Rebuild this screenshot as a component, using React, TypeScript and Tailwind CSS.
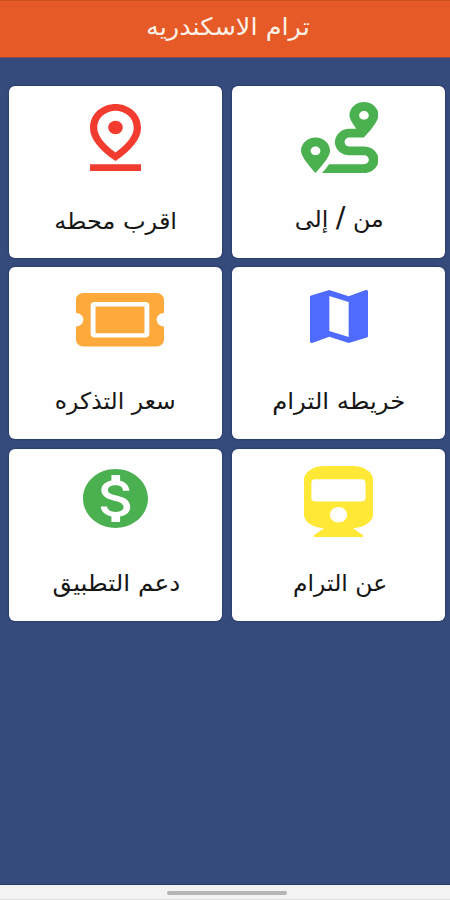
import type { ReactNode } from "react";

type IconProps = { box: string; className: string; children: ReactNode };

function Icon({ box, className, children }: IconProps) {
  return (
    <svg viewBox={box} preserveAspectRatio="none" fill="currentColor" className={`block shrink-0 ${className}`} aria-hidden="true">
      {children}
    </svg>
  );
}

type CardProps = { label: ReactNode; labelClass: string; icon: ReactNode };

function Card({ label, labelClass, icon }: CardProps) {
  return (
    <button className="flex h-[172px] flex-col rounded-[6px] bg-[#fefefe] shadow-[0_0_2px_rgba(15,30,75,0.8)]">
      <span className="flex h-[112px] w-full shrink-0 flex-col">{icon}</span>
      <span dir="rtl" className={`self-center whitespace-nowrap text-[23px] leading-[44px] text-[#161616] ${labelClass}`}>
        {label}
      </span>
    </button>
  );
}

export default function App() {
  return (
    <div className="flex h-[900px] w-[450px] flex-col overflow-hidden bg-[#344b7c] font-['DejaVu_Sans',sans-serif]">
      <header className="flex h-[58px] shrink-0 justify-center border-t border-b border-t-[#cb5423] border-b-[#8f4b50] bg-[#e55a27]">
        <h1 dir="rtl" className="ml-[6px] scale-x-[1.065] whitespace-nowrap text-[24px] leading-[52px] text-[#fff0e5]">
          ترام الاسكندريه
        </h1>
      </header>

      <main className="grid grow grid-cols-[213px_213px] content-start gap-x-[10px] gap-y-[9.6px] pl-[9px] pt-[27.7px]">
        <Card
          label="اقرب محطه"
          labelClass="mt-px scale-x-[1.045]"
          icon={
            <Icon box="5 2 14 20" className="ml-[81px] mt-[18px] h-[67px] w-[51px] text-[#f33c30]">
              <path d="M12 4c1.93 0 5 1.4 5 5.15 0 2.16-1.72 4.67-5 7.32-3.28-2.65-5-5.17-5-7.32C7 5.4 10.07 4 12 4m0-2C8.73 2 5 4.46 5 9.15c0 3.12 2.33 6.41 7 9.85 4.67-3.44 7-6.73 7-9.85C19 4.46 15.27 2 12 2z" />
              <path d="M12 7c-1.1 0-2 .9-2 2s.9 2 2 2 2-.9 2-2-.9-2-2-2zM5 20h14v2H5v-2z" />
            </Icon>
          }
        />
        <Card
          label={
            <>
              من <span className="text-[28px] leading-none">/</span> إلى
            </>
          }
          labelClass="-mt-px ml-px scale-x-[1.03]"
          icon={
            <Icon box="0 0 512 512" className="ml-[68.5px] mt-[16px] h-[71px] w-[77.5px] text-[#4bb04f]">
              <path d="M416 320h-96c-17.6 0-32-14.4-32-32s14.4-32 32-32h96s96-107 96-160-43-96-96-96-96 43-96 96c0 25.5 22.2 63.4 45.3 96H320c-52.9 0-96 43.1-96 96s43.1 96 96 96h96c17.6 0 32 14.4 32 32s-14.4 32-32 32H185.5c-16 24.8-33.8 47.7-47.3 64H416c52.9 0 96-43.1 96-96s-43.1-96-96-96zm0-256c17.7 0 32 14.3 32 32s-14.3 32-32 32-32-14.3-32-32 14.3-32 32-32zM96 256c-53 0-96 43-96 96s96 160 96 160 96-107 96-160-43-96-96-96zm0 128c-17.7 0-32-14.3-32-32s14.3-32 32-32 32 14.3 32 32-14.3 32-32 32z" />
            </Icon>
          }
        />
        <Card
          label="سعر التذكره"
          labelClass="scale-x-[1.02]"
          icon={
            <Icon box="0 64 576 384" className="ml-[67px] mt-[26px] h-[53.5px] w-[88px] text-[#fda93c]">
              <path d="M128 160h320v192H128V160zm400 96c0 26.51 21.49 48 48 48v96c0 26.51-21.49 48-48 48H48c-26.51 0-48-21.49-48-48v-96c26.51 0 48-21.49 48-48s-21.49-48-48-48v-96c0-26.51 21.49-48 48-48h480c26.51 0 48 21.49 48 48v96c-26.51 0-48 21.49-48 48zm-48-104c0-13.255-10.745-24-24-24H120c-13.255 0-24 10.745-24 24v208c0 13.255 10.745 24 24 24h336c13.255 0 24-10.745 24-24V152z" />
            </Icon>
          }
        />
        <Card
          label="خريطه الترام"
          labelClass="scale-x-[1.06]"
          icon={
            <Icon box="3 3 18 18" className="ml-[78px] mt-[23px] h-[53px] w-[58px] text-[#4e6bfd]">
              <path d="M20.5 3l-.16.03L15 5.1 9 3 3.36 4.9c-.21.07-.36.25-.36.48V20.5c0 .28.22.5.5.5l.16-.03L9 18.9l6 2.1 5.64-1.9c.21-.07.36-.25.36-.48V3.5c0-.28-.22-.5-.5-.5zM15 19l-6-2.11V5l6 2.11V19z" />
            </Icon>
          }
        />
        <Card
          label="دعم التطبيق"
          labelClass="ml-px scale-x-[1.075]"
          icon={
            <Icon box="2 2 20 20" className="ml-[74px] mt-[20px] h-[59px] w-[65px] text-[#4bb04f]">
              <path d="M12 2C6.48 2 2 6.48 2 12s4.48 10 10 10 10-4.48 10-10S17.52 2 12 2zm1.41 16.09V20h-2.67v-1.93c-1.71-.36-3.16-1.46-3.27-3.4h1.96c.1 1.05.82 1.87 2.65 1.87 1.96 0 2.4-.98 2.4-1.59 0-.83-.44-1.61-2.67-2.14-2.48-.6-4.18-1.62-4.18-3.67 0-1.72 1.39-2.84 3.11-3.21V4h2.67v1.95c1.86.45 2.79 1.86 2.85 3.39H14.3c-.05-1.11-.64-1.87-2.22-1.87-1.5 0-2.4.68-2.4 1.64 0 .84.65 1.39 2.67 1.91s4.18 1.39 4.18 3.91c-.01 1.83-1.38 2.83-3.12 3.16z" />
            </Icon>
          }
        />
        <Card
          label="عن الترام"
          labelClass="ml-[3px] scale-x-[1.02]"
          icon={
            <Icon box="0 0 448 512" className="ml-[72px] mt-[17px] h-[71px] w-[69px] text-[#ffe836]">
              <path d="M448 96v256c0 51.815-61.624 96-130.022 96l62.98 49.721C386.905 502.417 383.562 512 376 512H72c-7.578 0-10.892-9.594-4.957-14.279L130.022 448C61.82 448 0 403.954 0 352V96C0 42.981 64 0 128 0h192c65 0 128 42.981 128 96zm-48 136V120c0-13.255-10.745-24-24-24H72c-13.255 0-24 10.745-24 24v112c0 13.255 10.745 24 24 24h304c13.255 0 24-10.745 24-24zm-176 64c-30.928 0-56 25.072-56 56s25.072 56 56 56 56-25.072 56-56-25.072-56-56-56z" />
            </Icon>
          }
        />
      </main>

      <footer className="flex h-[16px] shrink-0 border-t border-b border-t-[#253d6e] border-b-[#dedede] bg-[#f3f3f3]">
        <span className="ml-[167px] mt-[6px] h-[4px] w-[120px] rounded-full bg-[#b5b5b5]" />
      </footer>
    </div>
  );
}
